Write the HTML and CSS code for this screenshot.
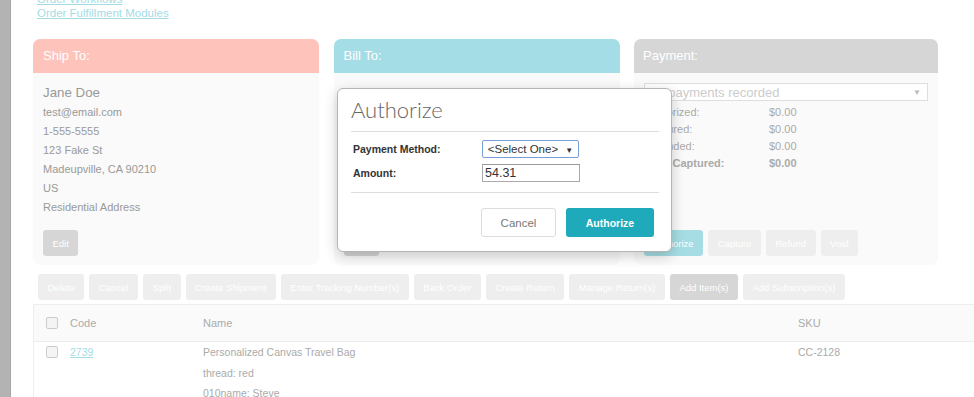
FILE: index.html
```html
<!DOCTYPE html>
<html lang="en">
<head>
    <meta charset="UTF-8">
    <meta name="viewport" content="width=device-width, initial-scale=1.0">
    <title>Order Detail</title>
    <link rel="stylesheet" href="styles.css">
</head>
<body>
    <div class="app">
        <aside class="sidebar"></aside>

        <main class="content">
            <div class="links">
                <a href="#">Order Workflows</a>
                <a href="#">Order Fulfillment Modules</a>
            </div>

            <div class="cards">
                <section class="card card-ship">
                    <div class="card-head">Ship To:</div>
                    <div class="card-body">
                        <div class="addr-name">Jane Doe</div>
                        <div class="addr-line">test@email.com</div>
                        <div class="addr-line">1-555-5555</div>
                        <div class="addr-line">123 Fake St</div>
                        <div class="addr-line">Madeupville, CA 90210</div>
                        <div class="addr-line">US</div>
                        <div class="addr-line">Residential Address</div>
                        <div class="card-actions">
                            <button class="btn-muted">Edit</button>
                        </div>
                    </div>
                </section>

                <section class="card card-bill">
                    <div class="card-head">Bill To:</div>
                    <div class="card-body">
                        <div class="addr-name">Jane Doe</div>
                        <div class="addr-line">test@email.com</div>
                        <div class="addr-line">1-555-5555</div>
                        <div class="addr-line">123 Fake St</div>
                        <div class="addr-line">Madeupville, CA 90210</div>
                        <div class="addr-line">US</div>
                        <div class="addr-line">&nbsp;</div>
                        <div class="card-actions">
                            <button class="btn-muted">Edit</button>
                        </div>
                    </div>
                </section>

                <section class="card card-pay">
                    <div class="card-head">Payment:</div>
                    <div class="card-body">
                        <div class="pay-select">
                            <span>No payments recorded</span>
                            <span class="pay-caret">&#9660;</span>
                        </div>
                        <div class="pay-rows">
                            <div class="pay-row"><span>Authorized:</span><span>$0.00</span></div>
                            <div class="pay-row"><span>Captured:</span><span>$0.00</span></div>
                            <div class="pay-row"><span>Refunded:</span><span>$0.00</span></div>
                            <div class="pay-row pay-total"><span>Total Captured:</span><span>$0.00</span></div>
                        </div>
                        <div class="card-actions">
                            <button class="btn-muted btn-cyan">Authorize</button>
                            <button class="btn-light">Capture</button>
                            <button class="btn-light">Refund</button>
                            <button class="btn-light">Void</button>
                        </div>
                    </div>
                </section>
            </div>

            <div class="toolbar">
                <button class="btn-light">Delete</button>
                <button class="btn-light">Cancel</button>
                <button class="btn-light">Split</button>
                <button class="btn-light">Create Shipment</button>
                <button class="btn-light">Enter Tracking Number(s)</button>
                <button class="btn-light">Back Order</button>
                <button class="btn-light">Create Return</button>
                <button class="btn-light">Manage Return(s)</button>
                <button class="btn-muted">Add Item(s)</button>
                <button class="btn-light">Add Subscription(s)</button>
            </div>

            <div class="items">
                <div class="items-row items-head">
                    <div class="cell-check"><span class="checkbox"></span></div>
                    <div>Code</div>
                    <div>Name</div>
                    <div>SKU</div>
                </div>
                <div class="items-row">
                    <div class="cell-check"><span class="checkbox"></span></div>
                    <div><a href="#">2739</a></div>
                    <div>
                        <div>Personalized Canvas Travel Bag</div>
                        <div class="item-attr">thread: red</div>
                        <div class="item-attr">010name: Steve</div>
                    </div>
                    <div>CC-2128</div>
                </div>
            </div>
        </main>
    </div>

    <div class="modal">
        <div class="modal-title">Authorize</div>
        <div class="modal-form">
            <div class="form-row">
                <label>Payment Method:</label>
                <div class="fake-select">&lt;Select One&gt; <span>&#9660;</span></div>
            </div>
            <div class="form-row">
                <label>Amount:</label>
                <div class="fake-input">54.31</div>
            </div>
        </div>
        <div class="modal-foot">
            <button class="btn-cancel">Cancel</button>
            <button class="btn-primary">Authorize</button>
        </div>
    </div>
</body>
</html>
```

FILE: styles.css
```css
body {
    margin: 0;
    font-family: "Liberation Sans", Arial, sans-serif;
    background: #fff;
    overflow: hidden;
}

button {
    font-family: inherit;
    border: none;
    cursor: pointer;
}

.app {
    display: flex;
    min-height: 397px;
}

.sidebar {
    width: 10px;
    flex-shrink: 0;
    background-color: #b3b3b3;
    border-right: 1px solid #a6a6a6;
}

.content {
    flex: 1;
    padding-left: 22px;
}

/* top links */
.links {
    margin-top: -8px;
    padding-left: 4px;
    line-height: 14px;
    font-size: 11.5px;
}

.links a {
    display: block;
    color: #a4dce5;
}

/* address / payment cards */
.cards {
    display: grid;
    grid-template-columns: 286px 286px 304px;
    column-gap: 14.5px;
    margin-top: 19px;
}

.card {
    display: flex;
    flex-direction: column;
    border-radius: 7px;
    overflow: hidden;
    background-color: #fafafa;
}

.card-head {
    height: 34px;
    line-height: 34px;
    padding-left: 10px;
    font-size: 13px;
    color: #fff;
}

.card-ship .card-head { background-color: #fec3bb; }
.card-bill .card-head { background-color: #a4dde5; }
.card-pay .card-head { background-color: #d6d6d6; padding-left: 9px; }

.card-body {
    flex: 1;
    display: flex;
    flex-direction: column;
    padding: 10px 10px 9px;
    color: #999;
}

.addr-name {
    font-size: 13.3px;
    line-height: 20px;
}

.addr-line {
    font-size: 11px;
    line-height: 19px;
}

.card-actions {
    display: flex;
    gap: 5px;
    margin-top: auto;
    padding-top: 13px;
}

.btn-muted,
.btn-light {
    height: 26px;
    padding: 0 9.5px;
    border-radius: 3px;
    font-size: 9.5px;
    color: #fff;
}

.btn-muted { background-color: #d6d6d6; }
.btn-light { background-color: #eeeeee; }
.btn-muted.btn-cyan { background-color: #a6dde4; }

.pay-select {
    display: flex;
    justify-content: space-between;
    align-items: center;
    height: 16px;
    padding: 0 6px 0 3px;
    border: 1px solid #dedede;
    background-color: #fff;
    font-size: 13px;
    color: #ccc;
}

.pay-caret {
    font-size: 8px;
    color: #bbb;
}

.pay-rows {
    margin-top: 3px;
}

.pay-row {
    display: grid;
    grid-template-columns: 125px 1fr;
    font-size: 11px;
    line-height: 17px;
    color: #aaa;
}

.pay-total {
    font-weight: bold;
}

/* action toolbar */
.toolbar {
    display: flex;
    gap: 5px;
    margin: 9px 0 4px 5px;
}

/* line items */
.items {
    border-top: 1px solid #eee;
    border-left: 1px solid #eee;
    font-size: 10.5px;
    color: #aaa;
}

.items-row {
    display: grid;
    grid-template-columns: 36px 133px 595px 1fr;
    line-height: 20px;
}

.items-head {
    height: 36px;
    align-items: center;
    background-color: #fafafa;
    border-bottom: 1px solid #eee;
    font-size: 11px;
}

.cell-check {
    display: flex;
    align-items: center;
    padding-left: 12px;
    height: 20px;
}

.checkbox {
    width: 10px;
    height: 10px;
    border: 1px solid #ccc;
    border-radius: 2px;
    background-color: #f4f4f4;
}

.items-row a {
    color: #a4dce5;
}

.item-attr {
    margin-top: 0.5px;
}

/* authorize dialog */
.modal {
    position: absolute;
    left: 337px;
    top: 88px;
    width: 308px;
    padding: 0 12px 14px 13px;
    background-color: #fff;
    border: 1px solid #b5b5b5;
    border-radius: 6px;
    box-shadow: 0 4px 14px rgba(0, 0, 0, 0.2);
}

.modal-title {
    height: 42px;
    line-height: 42px;
    border-bottom: 1px solid #ddd;
    font-family: Lato, "Liberation Sans", sans-serif;
    font-weight: 300;
    font-size: 22px;
    color: #666;
}

.modal-form {
    display: flex;
    flex-direction: column;
    gap: 6px;
    padding: 8px 0 10px 2px;
    border-bottom: 1px solid #ddd;
}

.form-row {
    display: flex;
    align-items: center;
}

.form-row label {
    width: 129px;
    font-size: 10.5px;
    font-weight: bold;
    color: #333;
}

.fake-select {
    width: 95px;
    height: 16px;
    line-height: 16px;
    border: 1px solid #7a9fd8;
    border-radius: 2px;
    text-align: center;
    font-size: 11.5px;
    color: #333;
}

.fake-select span {
    font-size: 8px;
    margin-left: 4px;
}

.fake-input {
    width: 94px;
    height: 16px;
    line-height: 16px;
    padding-left: 2px;
    border: 1px solid #aaa;
    border-top-color: #999;
    font-size: 12.5px;
    color: #333;
}

.modal-foot {
    display: flex;
    justify-content: flex-end;
    gap: 10px;
    padding: 15px 5px 0 0;
}

.btn-cancel,
.btn-primary {
    height: 29px;
    border-radius: 3px;
}

.btn-cancel {
    width: 75px;
    background-color: #fff;
    border: 1px solid #ddd;
    font-size: 11.5px;
    color: #777;
}

.btn-primary {
    width: 88px;
    background-color: #1eaabb;
    font-size: 10.5px;
    font-weight: bold;
    color: #fff;
}
```
